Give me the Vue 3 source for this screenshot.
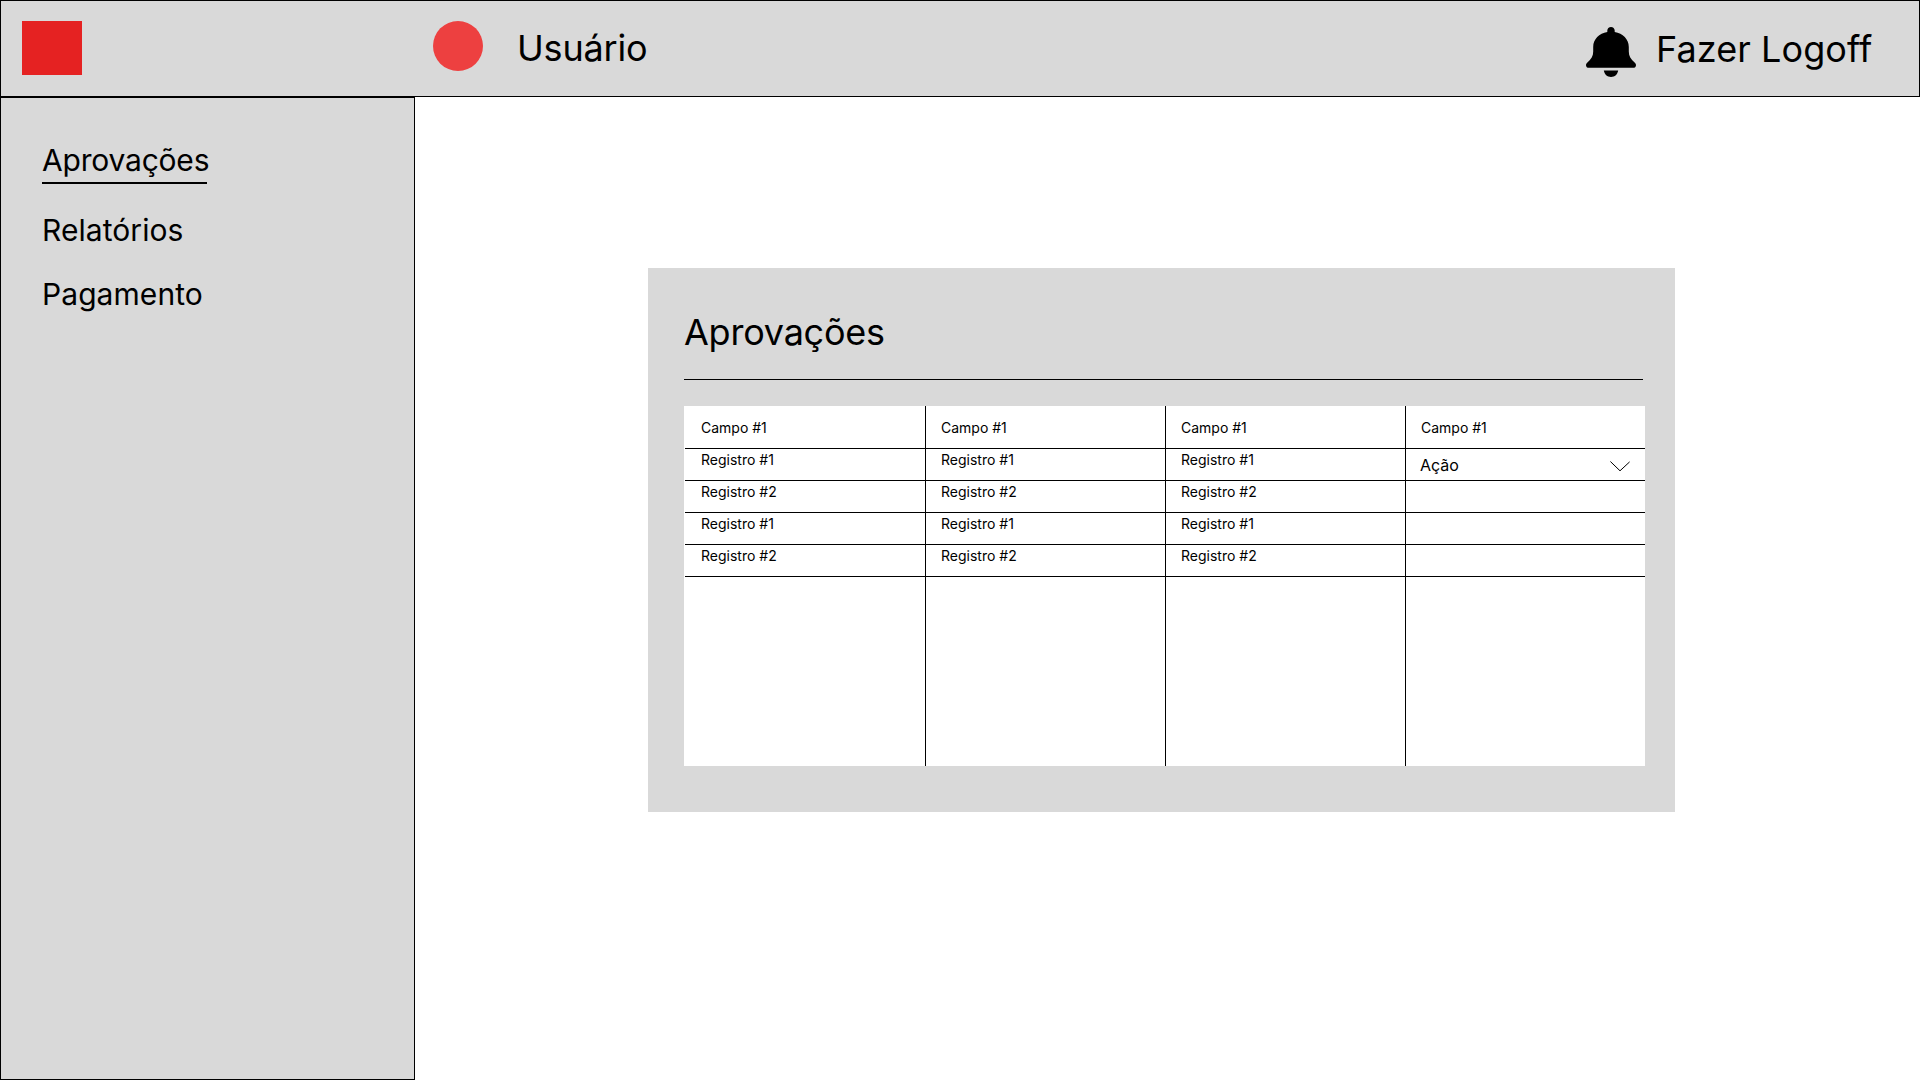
<script setup>
const menu = ['Aprovações', 'Relatórios', 'Pagamento']
const active = 'Aprovações'
const fields = ['Campo #1', 'Campo #1', 'Campo #1', 'Campo #1']
const records = ['Registro #1', 'Registro #2', 'Registro #1', 'Registro #2']
</script>

<template>
  <div class="page">
    <header class="topbar">
      <div class="logo"></div>
      <div class="avatar"></div>
      <span class="user">Usuário</span>
      <svg class="bell" viewBox="0 0 50 50" width="50" height="50" aria-hidden="true">
        <path d="M25 0C22.9 0 21.3 1.6 21.3 3.6V5.1C13.2 6.4 7.2 12.3 7.2 20V24.5C7.2 29 5.2 32.4 1.4 35.4C.4 36.3 0 37.2 0 38.2C0 39.8 1.2 40.8 2.9 40.8H47.1C48.8 40.8 50 39.8 50 38.2C50 37.2 49.6 36.3 48.6 35.4C44.8 32.4 42.8 29 42.8 24.5V20C42.8 12.3 36.8 6.4 28.7 5.1V3.6C28.7 1.6 27.1 0 25 0Z" />
        <path d="M17.8 43.6H32.2C31.6 47.4 28.8 50 25 50C21.2 50 18.4 47.4 17.8 43.6Z" />
      </svg>
      <span class="logoff">Fazer Logoff</span>
    </header>
    <div class="body">
      <nav class="sidebar">
        <a v-for="item in menu" :key="item" class="link" :class="{ active: item === active }">{{ item }}</a>
      </nav>
      <main class="content">
        <section class="card">
          <h1>Aprovações</h1>
          <div class="rule"></div>
          <div class="table">
            <div v-for="(field, c) in fields" :key="c" class="col">
              <div class="cell head">{{ field }}</div>
              <template v-if="c < 3">
                <div v-for="(record, r) in records" :key="r" class="cell">{{ record }}</div>
              </template>
              <template v-else>
                <div class="cell action">
                  <span>Ação</span>
                  <svg viewBox="0 0 20 11" width="20" height="11" aria-hidden="true">
                    <path d="M.4 .5L10 9.8L19.6 .9" />
                  </svg>
                </div>
                <div v-for="n in 3" :key="n" class="cell"></div>
              </template>
            </div>
          </div>
        </section>
      </main>
    </div>
  </div>
</template>

<style>
body {
  margin: 0;
  background: #fff;
}
</style>

<style scoped>
.page,
.page * {
  box-sizing: border-box;
}
.page {
  width: 1920px;
  height: 1080px;
  display: flex;
  flex-direction: column;
  font-family: Inter, "Liberation Sans", sans-serif;
  color: #000;
  overflow: hidden;
}
.topbar {
  height: 97px;
  flex: none;
  display: flex;
  align-items: flex-start;
  background: #d9d9d9;
  border: 1px solid #000;
  padding: 20px 0 0 21px;
  font-size: 36px;
  line-height: 44px;
  white-space: nowrap;
}
.logo {
  width: 60px;
  height: 54px;
  background: #e52222;
}
.avatar {
  width: 50px;
  height: 50px;
  margin-left: 351px;
  border-radius: 50%;
  background: #ed4040;
}
.user {
  margin: 5px 0 0 34px;
  letter-spacing: -0.2px;
}
.bell {
  margin: 6px 0 0 auto;
}
.logoff {
  width: 263px;
  margin: 6px 0 0 20px;
  letter-spacing: 0.08px;
}
.body {
  flex: 1;
  display: flex;
}
.sidebar {
  width: 415px;
  display: flex;
  flex-direction: column;
  align-items: flex-start;
  background: #d9d9d9;
  border: 1px solid #000;
  padding: 44px 0 0 41px;
  font-size: 30px;
  line-height: 36px;
}
.link {
  height: 36px;
  margin-bottom: 28px;
  letter-spacing: 0.06px;
}
.link.active {
  width: 165px;
  height: 42px;
  letter-spacing: -0.2px;
  border-bottom: 2px solid #000;
}
.content {
  flex: 1;
  padding: 171px 0 0 233px;
}
.card {
  width: 1027px;
  height: 544px;
  background: #d9d9d9;
  padding: 42px 0 0 36px;
}
h1 {
  margin: 0;
  height: 69px;
  font-size: 36px;
  font-weight: 400;
  line-height: 44px;
  letter-spacing: -0.23px;
}
.rule {
  width: 959px;
  height: 1px;
  background: #000;
}
.table {
  display: flex;
  width: 961px;
  height: 360px;
  margin-top: 26px;
  background: #fff;
  font-size: 14px;
  line-height: 17px;
}
.col {
  width: 240px;
  border-right: 1px solid #000;
}
.col:first-child {
  width: 242px;
  padding-left: 1px;
}
.col:first-child .cell {
  padding-left: 16px;
}
.col:last-child {
  width: 239px;
  border-right: 0;
}
.cell {
  height: 32px;
  padding: 2px 0 0 15px;
  border-bottom: 1px solid #000;
}
.cell.head {
  height: 43px;
  padding-top: 13px;
}
.cell.action {
  display: flex;
  justify-content: space-between;
  padding: 7px 15px 0 14px;
  font-size: 16px;
  line-height: 19px;
}
.action svg {
  margin-top: 5px;
  fill: none;
  stroke: #000;
  stroke-width: 1;
}
</style>
